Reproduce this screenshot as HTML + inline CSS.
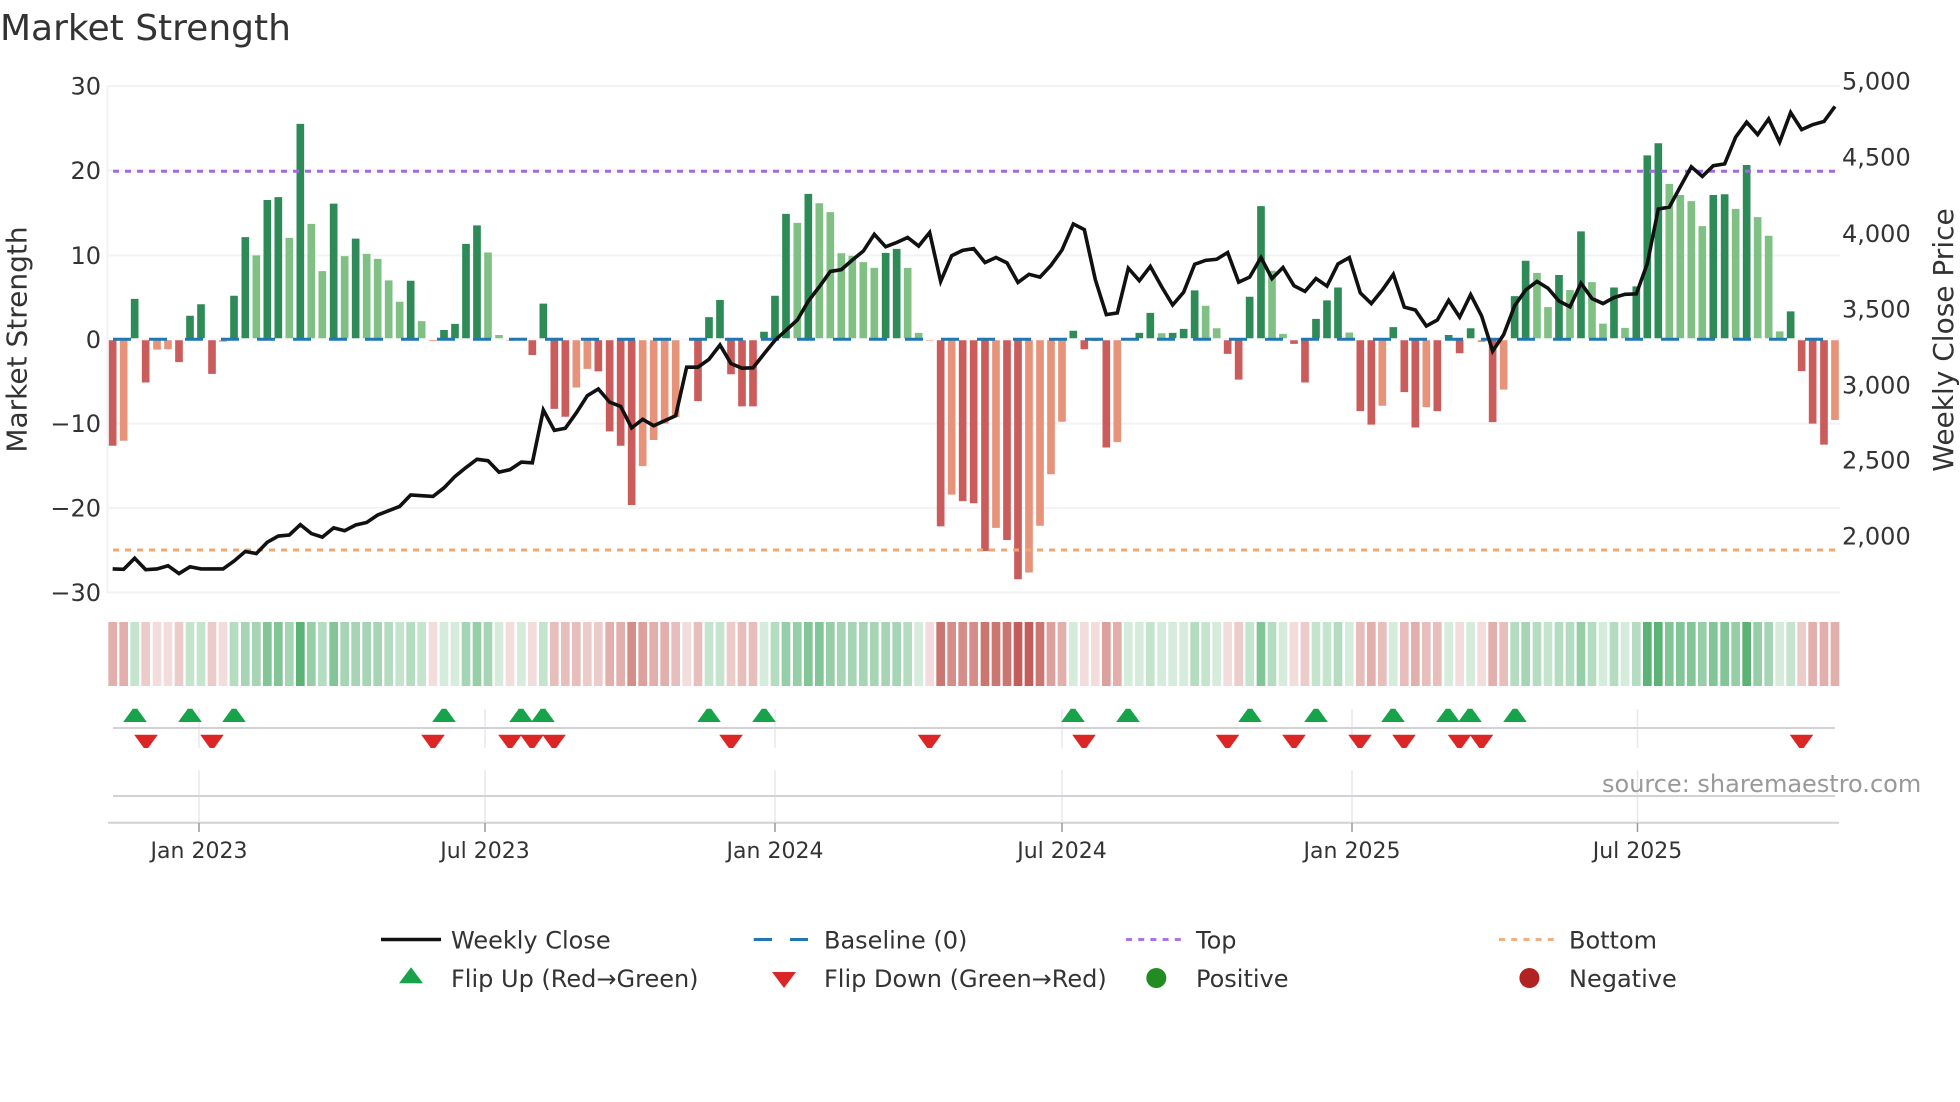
<!DOCTYPE html>
<html lang="en">
<head>
<meta charset="utf-8">
<title>Market Strength</title>
<style>
html,body{margin:0;padding:0;background:#fff;width:1960px;height:1102px;overflow:hidden}
svg{display:block}
text{font-family:"DejaVu Sans","Liberation Sans",sans-serif;fill:#333}
.t{font-size:24px}
.x{font-size:22px;text-anchor:middle}
.a{font-size:28px;text-anchor:middle}
.e{text-anchor:end}
</style>
</head>
<body>
<svg width="1960" height="1102" viewBox="0 0 1960 1102" xmlns="http://www.w3.org/2000/svg">
<rect width="1960" height="1102" fill="#fff"/>
<text x="0" y="40" style="font-size:36px">Market Strength</text>

<!-- grid -->
<path d="M108 86H1840M108 170.5H1840M108 255.4H1840M108 423.6H1840M108 507.9H1840M108 592.5H1840M107.5 85V593" stroke="#f2f2f7" stroke-width="2" fill="none"/>

<!-- bars -->
<g transform="translate(0,60) scale(.33333,.35714)" fill="none" stroke-width="23">
<path stroke="#2e8b57" d="M404 782V669M570 782V716M603 782V684M702 782V660M736 782V496M802 782V392M835 782V384M901 782V179M1001 782V402M1067 782V500M1232 782V618M1332 782V756M1365 782V739M1398 782V515M1431 782V463M1564 782V779M1630 782V682M2127 782V720M2160 782V672M2292 782V761M2325 782V660M2358 782V431M2425 782V375M2657 782V540M2690 782V529M3220 782V758M3418 782V764M3451 782V708M3518 782V764M3551 782V753M3584 782V645M3749 782V663M3783 782V409M3948 782V725M3981 782V673M4014 782V637M4180 782V748M4346 782V770M4412 782V751M4544 782V661M4577 782V562M4677 782V602M4743 782V480M4842 782V637M4909 782V634M4942 782V267M4975 782V233M5140 782V378M5174 782V376M5240 782V294M5372 782V704"/>
<path stroke="#81c084" d="M769 782V547M868 782V498M934 782V459M967 782V591M1034 782V549M1100 782V543M1133 782V557M1166 782V617M1199 782V677M1265 782V731M1464 782V539M1497 782V770M2392 782V456M2458 782V401M2491 782V426M2524 782V541M2557 782V548M2590 782V566M2623 782V582M2723 782V582M2756 782V764M3485 782V765M3617 782V688M3650 782V751M3816 782V590M3849 782V767M4048 782V763M4611 782V596M4644 782V692M4710 782V644M4776 782V622M4809 782V738M4875 782V750M5008 782V347M5041 782V378M5074 782V395M5107 782V465M5207 782V417M5273 782V440M5306 782V492M5339 782V760"/>
<path stroke="#cb5c5c" d="M338 782V1080M437 782V903M537 782V846M636 782V879M1597 782V826M1663 782V977M1696 782V999M1795 782V872M1829 782V1040M1862 782V1080M1895 782V1246M2094 782V955M2193 782V880M2226 782V970M2259 782V970M2822 782V1306M2888 782V1235M2921 782V1241M2955 782V1375M3021 782V1344M3054 782V1454M3253 782V810M3319 782V1085M3683 782V823M3716 782V895M3882 782V795M3915 782V903M4081 782V983M4114 782V1021M4213 782V930M4246 782V1029M4312 782V983M4379 782V821M4478 782V1014M5405 782V871M5438 782V1018M5472 782V1077"/>
<path stroke="#e6937a" d="M371 782V1066M471 782V811M504 782V810M669 782V789M1299 782V787M1530 782V786M1729 782V917M1762 782V865M1928 782V1137M1961 782V1064M1994 782V1018M2027 782V1000M2789 782V786M2855 782V1217M2988 782V1310M3087 782V1435M3120 782V1304M3153 782V1160M3186 782V1013M3286 782V787M3352 782V1070M4147 782V968M4279 782V972M4445 782V790M4511 782V923M5505 782V1008"/>
</g>

<!-- zero, thresholds -->
<path d="M108 339.3H1840" stroke="#f8f8fc" stroke-width="2"/>
<path d="M113 339.3H1835" stroke="#1f77b4" stroke-width="3" stroke-dasharray="18 18" fill="none"/>
<path d="M113 171.3H1835" stroke="#a06be2" stroke-width="3" stroke-dasharray="6 6" fill="none"/>
<path d="M113 550H1835" stroke="#f0a872" stroke-width="3" stroke-dasharray="6 6" fill="none"/>

<!-- weekly close -->
<g transform="translate(0,60) scale(.33333,.35714)">
<polyline fill="none" stroke="#111" stroke-width="3.6" stroke-linejoin="miter" vector-effect="non-scaling-stroke" points="338,1425 371,1426 404,1395 437,1427 471,1425 504,1416 537,1438 570,1419 603,1425 636,1425 669,1425 702,1403 736,1376 769,1382 802,1350 835,1333 868,1330 901,1301 934,1326 967,1336 1001,1310 1034,1318 1067,1302 1100,1295 1133,1274 1166,1262 1199,1250 1232,1218 1265,1220 1299,1222 1332,1198 1365,1166 1398,1141 1431,1118 1464,1122 1497,1154 1530,1147 1564,1126 1597,1128 1630,980 1663,1037 1696,1031 1729,988 1762,940 1795,921 1829,958 1862,970 1895,1030 1928,1006 1961,1024 1994,1010 2027,996 2060,860 2094,860 2127,838 2160,798 2193,850 2226,863 2259,862 2292,823 2325,785 2358,757 2392,728 2425,675 2458,635 2491,592 2524,587 2557,560 2590,535 2623,488 2657,523 2690,511 2723,497 2756,521 2789,483 2822,620 2855,548 2888,533 2921,528 2955,567 2988,553 3021,568 3054,623 3087,600 3120,608 3153,575 3186,532 3220,459 3253,475 3286,615 3319,713 3352,708 3385,583 3418,618 3451,578 3485,635 3518,686 3551,650 3584,572 3617,561 3650,558 3683,539 3716,622 3749,608 3783,553 3816,612 3849,581 3882,632 3915,648 3948,612 3981,633 4014,571 4048,553 4081,652 4114,682 4147,644 4180,600 4213,692 4246,700 4279,745 4312,728 4346,673 4379,720 4412,657 4445,717 4478,815 4511,769 4544,688 4577,644 4611,620 4644,639 4677,675 4710,691 4743,625 4776,668 4809,682 4842,665 4875,656 4909,655 4942,570 4975,417 5008,412 5041,355 5074,299 5107,326 5140,296 5174,291 5207,216 5240,174 5273,209 5306,165 5339,230 5372,147 5405,195 5438,181 5472,172 5505,130"/>
</g>

<!-- left ticks -->
<text class="t e" x="101" y="94.6">30</text>
<text class="t e" x="101" y="179">20</text>
<text class="t e" x="101" y="264">10</text>
<text class="t e" x="101" y="348">0</text>
<text class="t e" x="101" y="432.2">−10</text>
<text class="t e" x="101" y="516.5">−20</text>
<text class="t e" x="101" y="601">−30</text>
<!-- right ticks -->
<text class="t" x="1842" y="89.3">5,000</text>
<text class="t" x="1842" y="165.6">4,500</text>
<text class="t" x="1842" y="242.2">4,000</text>
<text class="t" x="1842" y="317.6">3,500</text>
<text class="t" x="1842" y="393.6">3,000</text>
<text class="t" x="1842" y="468.6">2,500</text>
<text class="t" x="1842" y="544.3">2,000</text>
<!-- axis titles -->
<text class="a" transform="translate(26.5,339.5) rotate(-90)">Market Strength</text>
<text class="a" transform="translate(1953,340) rotate(-90)">Weekly Close Price</text>

<!-- heat strip -->
<g transform="translate(0,622) scale(.33333,1)" fill="none" stroke-width="26">
<path stroke="#2e9e50" stroke-opacity=".2" d="M1332 0V64M1365 0V64M1497 0V64M1564 0V64M2292 0V64M2756 0V64M3220 0V64M3385 0V64M3418 0V64M3485 0V64M3518 0V64M3551 0V64M3650 0V64M3849 0V64M4048 0V64M4180 0V64M4346 0V64M4412 0V64M4809 0V64M4875 0V64M5339 0V64"/>
<path stroke="#2e9e50" stroke-opacity=".28" d="M404 0V64M570 0V64M603 0V64M1199 0V64M1265 0V64M1630 0V64M2127 0V64M2160 0V64M3451 0V64M3617 0V64M3749 0V64M3948 0V64M3981 0V64M4644 0V64M5372 0V64"/>
<path stroke="#2e9e50" stroke-opacity=".36" d="M702 0V64M967 0V64M1166 0V64M1232 0V64M2325 0V64M2723 0V64M3584 0V64M3816 0V64M4014 0V64M4544 0V64M4611 0V64M4677 0V64M4710 0V64M4776 0V64M4842 0V64M4909 0V64"/>
<path stroke="#2e9e50" stroke-opacity=".43" d="M736 0V64M769 0V64M868 0V64M1034 0V64M1067 0V64M1100 0V64M1133 0V64M1398 0V64M1464 0V64M2524 0V64M2557 0V64M2590 0V64M2623 0V64M2657 0V64M2690 0V64M4577 0V64M5306 0V64"/>
<path stroke="#2e9e50" stroke-opacity=".5" d="M934 0V64M1431 0V64M2358 0V64M2392 0V64M2491 0V64M4743 0V64M5107 0V64M5207 0V64M5273 0V64"/>
<path stroke="#2e9e50" stroke-opacity=".6" d="M802 0V64M835 0V64M1001 0V64M2425 0V64M2458 0V64M3783 0V64M5008 0V64M5041 0V64M5074 0V64M5140 0V64M5174 0V64"/>
<path stroke="#2e9e50" stroke-opacity=".78" d="M901 0V64M4942 0V64M4975 0V64M5240 0V64"/>
<path stroke="#b9413c" stroke-opacity=".18" d="M471 0V64M504 0V64M669 0V64M1299 0V64M1530 0V64M1597 0V64M2060 0V64M2789 0V64M3253 0V64M3286 0V64M3683 0V64M3882 0V64M4379 0V64M4445 0V64"/>
<path stroke="#b9413c" stroke-opacity=".27" d="M437 0V64M537 0V64M636 0V64M1762 0V64M1795 0V64M2193 0V64M3716 0V64M3915 0V64M5405 0V64"/>
<path stroke="#b9413c" stroke-opacity=".34" d="M1663 0V64M1696 0V64M1729 0V64M2027 0V64M2094 0V64M2226 0V64M2259 0V64M4081 0V64M4147 0V64M4213 0V64M4279 0V64M4312 0V64M4511 0V64"/>
<path stroke="#b9413c" stroke-opacity=".42" d="M338 0V64M371 0V64M1829 0V64M1862 0V64M1961 0V64M1994 0V64M3186 0V64M3352 0V64M4114 0V64M4246 0V64M4478 0V64M5438 0V64M5472 0V64M5505 0V64"/>
<path stroke="#b9413c" stroke-opacity=".5" d="M1928 0V64M3153 0V64M3319 0V64"/>
<path stroke="#b9413c" stroke-opacity=".6" d="M1895 0V64M2855 0V64M2888 0V64M2921 0V64"/>
<path stroke="#b9413c" stroke-opacity=".72" d="M2822 0V64M2955 0V64M2988 0V64M3021 0V64M3120 0V64"/>
<path stroke="#b9413c" stroke-opacity=".85" d="M3054 0V64M3087 0V64"/>
</g>

<!-- vertical date grid -->
<path d="M199 709V748M199 770V823M485 709V748M485 770V823M775 709V748M775 770V823M1062 709V748M1062 770V823M1352 709V748M1352 770V823M1637.5 709V748M1637.5 770V823" stroke="#e8e8ee" stroke-width="1.5" fill="none"/>
<!-- axis lines -->
<path d="M113 728H1835M113 796H1835" stroke="#d2d2d6" stroke-width="2" fill="none"/>
<path d="M108 822.7H1839" stroke="#d2d2d6" stroke-width="2" fill="none"/>
<path d="M199 823V832M485 823V832M775 823V832M1062 823V832M1352 823V832M1637.5 823V832" stroke="#999" stroke-width="1.5" fill="none"/>

<!-- flip up markers -->
<g fill="#16a34a">
<path d="M-11.8 722L-2.2 708.7H2.2L11.8 722Z" transform="translate(135,0)"/>
<path d="M-11.8 722L-2.2 708.7H2.2L11.8 722Z" transform="translate(190,0)"/>
<path d="M-11.8 722L-2.2 708.7H2.2L11.8 722Z" transform="translate(234,0)"/>
<path d="M-11.8 722L-2.2 708.7H2.2L11.8 722Z" transform="translate(444,0)"/>
<path d="M-11.8 722L-2.2 708.7H2.2L11.8 722Z" transform="translate(521,0)"/>
<path d="M-11.8 722L-2.2 708.7H2.2L11.8 722Z" transform="translate(543,0)"/>
<path d="M-11.8 722L-2.2 708.7H2.2L11.8 722Z" transform="translate(709,0)"/>
<path d="M-11.8 722L-2.2 708.7H2.2L11.8 722Z" transform="translate(764,0)"/>
<path d="M-11.8 722L-2.2 708.7H2.2L11.8 722Z" transform="translate(1073,0)"/>
<path d="M-11.8 722L-2.2 708.7H2.2L11.8 722Z" transform="translate(1128,0)"/>
<path d="M-11.8 722L-2.2 708.7H2.2L11.8 722Z" transform="translate(1250,0)"/>
<path d="M-11.8 722L-2.2 708.7H2.2L11.8 722Z" transform="translate(1316,0)"/>
<path d="M-11.8 722L-2.2 708.7H2.2L11.8 722Z" transform="translate(1393,0)"/>
<path d="M-11.8 722L-2.2 708.7H2.2L11.8 722Z" transform="translate(1448,0)"/>
<path d="M-11.8 722L-2.2 708.7H2.2L11.8 722Z" transform="translate(1470,0)"/>
<path d="M-11.8 722L-2.2 708.7H2.2L11.8 722Z" transform="translate(1515,0)"/>
</g>
<!-- flip down markers -->
<g fill="#dc2626">
<path d="M-11.8 734.7L-2.2 748H2.2L11.8 734.7Z" transform="translate(146,0)"/>
<path d="M-11.8 734.7L-2.2 748H2.2L11.8 734.7Z" transform="translate(212,0)"/>
<path d="M-11.8 734.7L-2.2 748H2.2L11.8 734.7Z" transform="translate(433,0)"/>
<path d="M-11.8 734.7L-2.2 748H2.2L11.8 734.7Z" transform="translate(510,0)"/>
<path d="M-11.8 734.7L-2.2 748H2.2L11.8 734.7Z" transform="translate(532,0)"/>
<path d="M-11.8 734.7L-2.2 748H2.2L11.8 734.7Z" transform="translate(554,0)"/>
<path d="M-11.8 734.7L-2.2 748H2.2L11.8 734.7Z" transform="translate(731,0)"/>
<path d="M-11.8 734.7L-2.2 748H2.2L11.8 734.7Z" transform="translate(929.5,0)"/>
<path d="M-11.8 734.7L-2.2 748H2.2L11.8 734.7Z" transform="translate(1084,0)"/>
<path d="M-11.8 734.7L-2.2 748H2.2L11.8 734.7Z" transform="translate(1227.5,0)"/>
<path d="M-11.8 734.7L-2.2 748H2.2L11.8 734.7Z" transform="translate(1294,0)"/>
<path d="M-11.8 734.7L-2.2 748H2.2L11.8 734.7Z" transform="translate(1360,0)"/>
<path d="M-11.8 734.7L-2.2 748H2.2L11.8 734.7Z" transform="translate(1404,0)"/>
<path d="M-11.8 734.7L-2.2 748H2.2L11.8 734.7Z" transform="translate(1459.5,0)"/>
<path d="M-11.8 734.7L-2.2 748H2.2L11.8 734.7Z" transform="translate(1481.5,0)"/>
<path d="M-11.8 734.7L-2.2 748H2.2L11.8 734.7Z" transform="translate(1801.5,0)"/>
</g>

<!-- watermark -->
<text x="1602" y="792" style="font-size:24px;fill:#999">source: sharemaestro.com</text>

<!-- x ticks -->
<text class="x" x="199" y="858">Jan 2023</text>
<text class="x" x="485" y="858">Jul 2023</text>
<text class="x" x="775" y="858">Jan 2024</text>
<text class="x" x="1062" y="858">Jul 2024</text>
<text class="x" x="1352" y="858">Jan 2025</text>
<text class="x" x="1637.5" y="858">Jul 2025</text>

<!-- legend -->
<path d="M381 939.5H441" stroke="#111" stroke-width="3.5" fill="none"/>
<path d="M753.7 939.5H772M790 939.5H808" stroke="#1f77b4" stroke-width="3" fill="none"/>
<path d="M1126 939.5H1182" stroke="#a874e8" stroke-width="3" stroke-dasharray="6 6.2" fill="none"/>
<path d="M1499 939.5H1554" stroke="#f0b07f" stroke-width="3" stroke-dasharray="6 6.2" fill="none"/>
<text class="t" x="451" y="948.5">Weekly Close</text>
<text class="t" x="824" y="948.5">Baseline (0)</text>
<text class="t" x="1196" y="948.5">Top</text>
<text class="t" x="1569" y="948.5">Bottom</text>
<path d="M399 983.3L411 967.3L423 983.3Z" fill="#16a34a"/>
<path d="M772 972L796 972L784 988Z" fill="#dc2626"/>
<circle cx="1156.3" cy="978" r="10" fill="#228b22"/>
<circle cx="1529.4" cy="978" r="10" fill="#b22222"/>
<text class="t" x="451" y="987">Flip Up (Red→Green)</text>
<text class="t" x="824" y="987">Flip Down (Green→Red)</text>
<text class="t" x="1196" y="987">Positive</text>
<text class="t" x="1569" y="987">Negative</text>
</svg>
</body>
</html>
